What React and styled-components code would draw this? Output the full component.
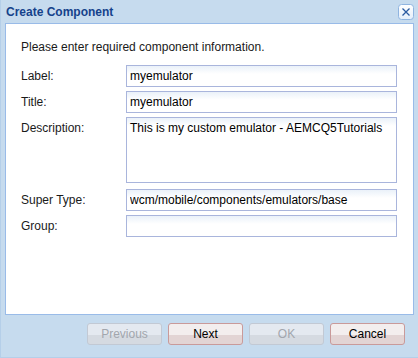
import React from 'react'
import styled, { createGlobalStyle } from 'styled-components'

const GlobalStyle = createGlobalStyle`
  html, body {
    margin: 0;
    padding: 0;
    background: #c6dbee;
  }
  body {
    font-family: "Liberation Sans", Arial, sans-serif;
    font-size: 12px;
    color: #000;
  }
`;

const fields = [
  { label: 'Label:', value: 'myemulator' },
  { label: 'Title:', value: 'myemulator' },
  { label: 'Description:', value: 'This is my custom emulator - AEMCQ5Tutorials', multiline: true },
  { label: 'Super Type:', value: 'wcm/mobile/components/emulators/base', gapTop: 2 },
  { label: 'Group:', value: '' },
]

const buttons = [
  { text: 'Previous', disabled: true },
  { text: 'Next' },
  { text: 'OK', disabled: true },
  { text: 'Cancel' },
]

function CloseIcon() {
  return (
    <svg width="16" height="16" viewBox="0 0 16 16">
      <defs>
        <linearGradient id="closeBg" x1="0" y1="0" x2="0" y2="1">
          <stop offset="0" stopColor="#ffffff" />
          <stop offset="1" stopColor="#e4eefa" />
        </linearGradient>
      </defs>
      <rect x="0.5" y="0.5" width="15" height="15" rx="3" fill="url(#closeBg)" stroke="#8fb4e0" />
      <path d="M4.5 4.5 L11.5 11.5 M11.5 4.5 L4.5 11.5" stroke="#2a5aa0" strokeWidth="1.3" />
    </svg>
  )
}

function App() {
  return (
    <Window>
      <GlobalStyle />
      <Header>
        <Title>Create Component</Title>
        <CloseButton><CloseIcon /></CloseButton>
      </Header>
      <Body>
        <Intro>Please enter required component information.</Intro>
        <Form>
          {fields.map((f) => (
            <Row key={f.label} $gapTop={f.gapTop}>
              <Label>{f.label}</Label>
              {f.multiline
                ? <TextArea defaultValue={f.value} />
                : <Input defaultValue={f.value} />}
            </Row>
          ))}
        </Form>
      </Body>
      <Footer>
        {buttons.map((b) => (
          <Button key={b.text} disabled={b.disabled}>{b.text}</Button>
        ))}
      </Footer>
    </Window>
  )
}

const Window = styled.div`
  width: 418px;
  height: 358px;
  box-sizing: border-box;
  background: #c6dbee;
  border-left: 1px solid #b5cfe9;
  border-bottom: 1px solid #b5cfe9;
  display: flex;
  flex-direction: column;
`;

const Header = styled.div`
  height: 23px;
  display: flex;
  align-items: center;
  justify-content: space-between;
  padding: 0 4px 0 5px;
`;

const Title = styled.div`
  font-weight: bold;
  font-size: 12px;
  color: #15428b;
  padding-top: 1px;
`;

const CloseButton = styled.div`
  width: 16px;
  height: 16px;
  margin-top: 1px;
  display: flex;
`;

const Body = styled.div`
  margin: 0 4px;
  height: 292px;
  box-sizing: border-box;
  background: #fff;
  border: 1px solid #99bbe8;
  padding: 15px 15px 0;
`;

const Intro = styled.div`
  line-height: 16px;
  color: #1a1a1a;
`;

const Form = styled.div`
  margin-top: 10px;
  display: flex;
  flex-direction: column;
`;

const Row = styled.div`
  display: flex;
  align-items: flex-start;
  margin-bottom: 4px;
  margin-top: ${(p) => p.$gapTop || 0}px;
`;

const Label = styled.div`
  width: 105px;
  line-height: 22px;
  color: #1a1a1a;
`;

const fieldStyle = `
  width: 271px;
  box-sizing: border-box;
  border: 1px solid #a9b5dc;
  background: linear-gradient(#eaf1f9, #ffffff 8px);
  font-family: "Liberation Sans", Arial, sans-serif;
  font-size: 12px;
  color: #000;
  padding: 0 3px;
  margin: 0;
  outline: none;
`;

const Input = styled.input`
  ${fieldStyle}
  height: 22px;
`;

const TextArea = styled.textarea`
  ${fieldStyle}
  height: 66px;
  padding-top: 3px;
  line-height: 14px;
  resize: none;
  overflow: hidden;
`;

const Footer = styled.div`
  display: flex;
  justify-content: flex-end;
  gap: 6px;
  padding: 8px 13px 0 0;
`;

const Button = styled.button`
  width: 75px;
  height: 22px;
  box-sizing: border-box;
  border-radius: 3px;
  font-family: "Liberation Sans", Arial, sans-serif;
  font-size: 12px;
  padding: 0;
  border: 1px solid ${(p) => (p.disabled ? '#c2c9d4' : '#c99a9a')};
  color: ${(p) => (p.disabled ? '#a2a6ad' : '#000')};
  background: ${(p) =>
    p.disabled
      ? 'linear-gradient(#e4e9f0 0, #e4e9f0 55%, #d5dae1 55%, #d5dae1 100%)'
      : 'linear-gradient(#f3eeee 0, #f3eeee 55%, #e2d4d4 55%, #e2d4d4 100%)'};
`;

export default App
